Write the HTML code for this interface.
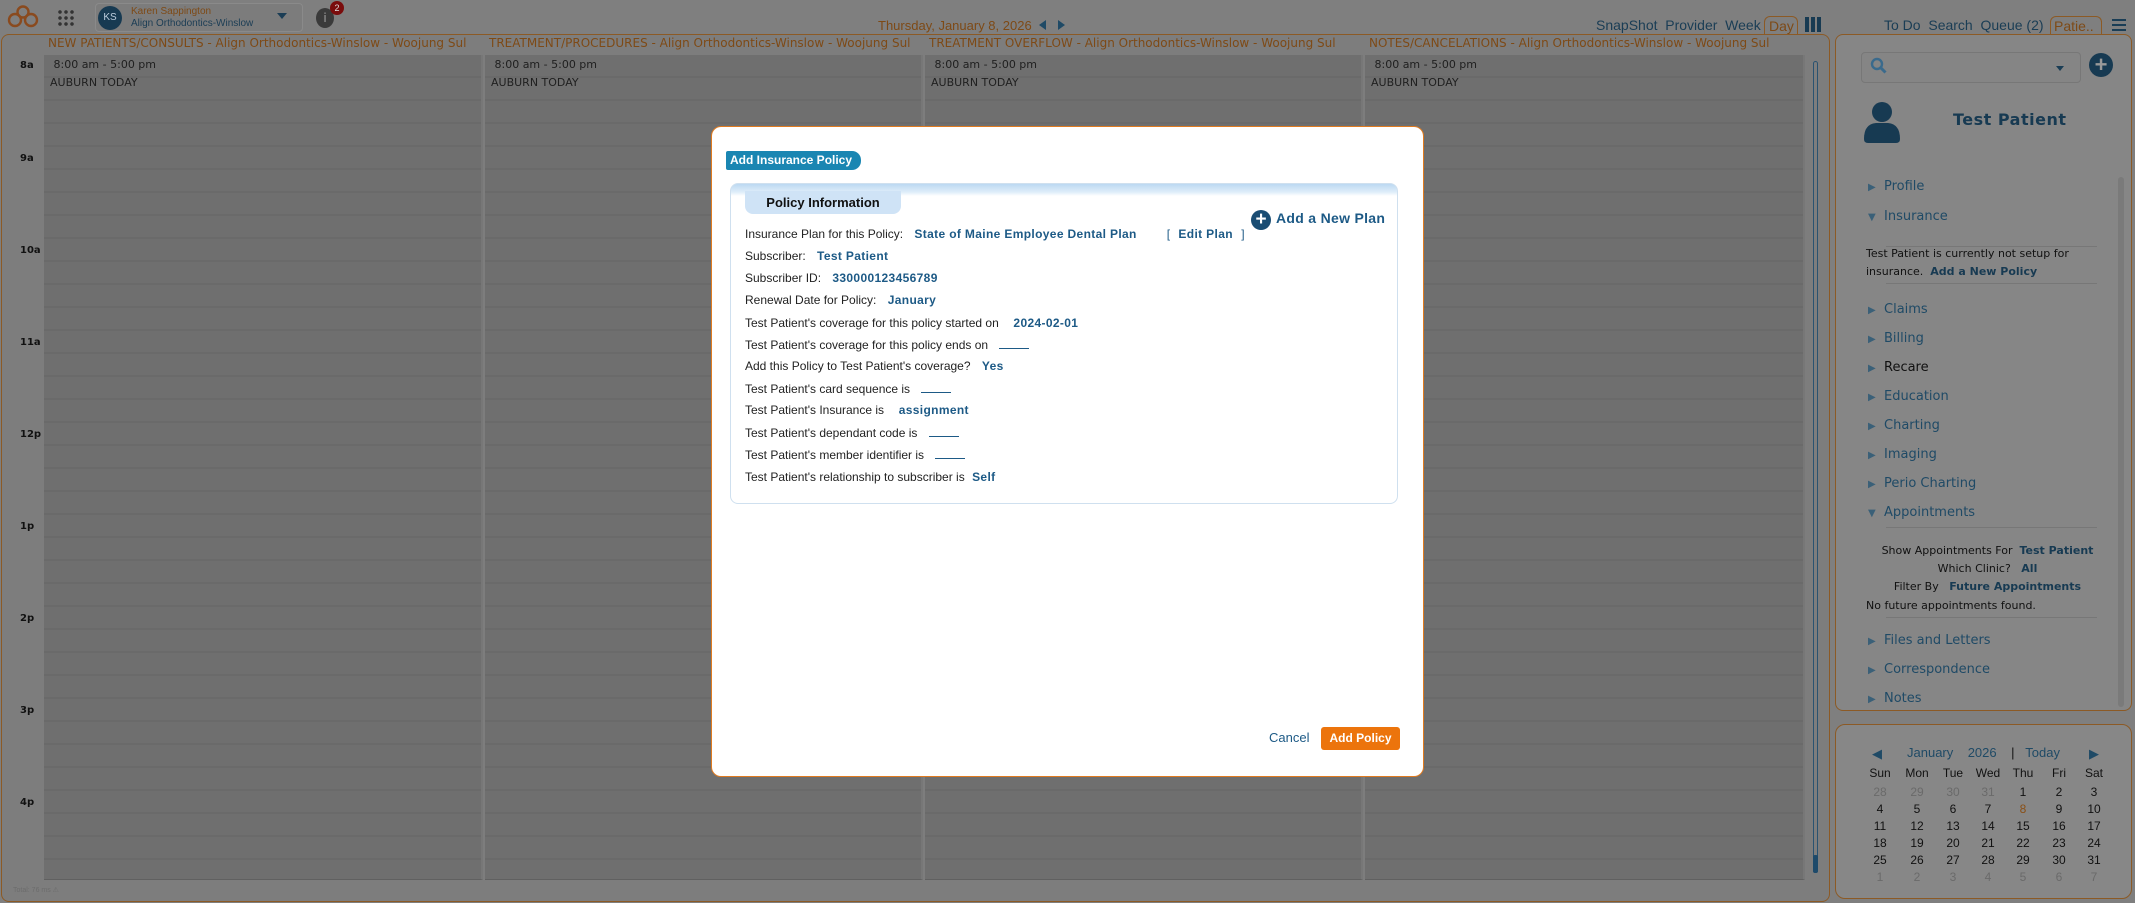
<!DOCTYPE html>
<html><head><meta charset="utf-8">
<style>
*{margin:0;padding:0;box-sizing:border-box}
body{width:2135px;height:903px;background:#7f7f7f;position:relative;overflow:hidden;font-family:"Liberation Sans",sans-serif}
.a{position:absolute;white-space:nowrap}
.dv{font-family:"DejaVu Sans",sans-serif}
.col{position:absolute;top:55px;height:825px;background:#6f6f6f repeating-linear-gradient(to bottom,transparent 0,transparent 21px,#6a6a6a 21px,#6a6a6a 23px);border-right:2px solid #777;border-bottom:1px solid #606060}
.hd{position:absolute;top:36px;font-size:12px;color:#7e4a16}
.tm{font-size:11px;color:#202020}
.hr{font-size:10px;font-weight:bold;color:#111;left:20px}
.lbl{position:absolute;left:745px;font-size:12px;color:#222}
.lbl b{color:#1d5a86;margin-left:8px;letter-spacing:.35px}
.blank{display:inline-block;width:30px;border-bottom:1px solid #1d5a86;margin-left:8px;height:9px}
.mi{position:absolute;left:1868px;font-size:13px;color:#1f4a66;font-family:"DejaVu Sans",sans-serif}
.mi i{font-style:normal;font-size:10px;color:#3a6078;display:inline-block;width:16px}
.cal{position:absolute;font-size:12px;color:#111;text-align:center;width:30px}
</style></head><body>

<!-- top bar -->
<svg class="a" style="left:6px;top:5px" width="34" height="24" viewBox="0 0 34 24"><g fill="none" stroke="#8a4a1e" stroke-width="2.4"><circle cx="17" cy="7" r="5.5"/><circle cx="9" cy="15" r="6"/><circle cx="25" cy="15" r="6"/></g></svg>
<div class="a" style="left:57px;top:9px;width:18px;height:18px;background:radial-gradient(circle,#333 1.6px,transparent 2px) 0 0/6px 6px"></div>
<div class="a" style="left:95px;top:3px;width:208px;height:29px;border:1px solid #8a8a8a;border-radius:4px;background:#7c7c7c"></div>
<div class="a" style="left:98px;top:6px;width:24px;height:24px;border-radius:50%;background:#173a52;color:#bcd;font-size:10px;text-align:center;line-height:24px">KS</div>
<div class="a" style="left:131px;top:6px;font-size:10px;color:#7e4a16">Karen Sappington</div>
<div class="a" style="left:131px;top:18px;font-size:10px;color:#1b3d55">Align Orthodontics-Winslow</div>
<div class="a" style="left:277px;top:13px;width:0;height:0;border:5px solid transparent;border-top:6px solid #1b3d55"></div>
<div class="a" style="left:316px;top:8px;width:18px;height:20px;border-radius:50%;background:#3a3a3a;color:#777;font-size:13px;font-weight:bold;text-align:center;line-height:20px">i</div>
<div class="a" style="left:330px;top:1px;width:14px;height:14px;border-radius:50%;background:#7a0c0c;color:#ddd;font-size:9px;text-align:center;line-height:14px">2</div>
<div class="a" style="left:878px;top:18px;font-size:13px;color:#7e4a16">Thursday, January 8, 2026</div>
<div class="a" style="left:1039px;top:20px;border:5px solid transparent;border-right:7px solid #1f4a66;border-left:0"></div>
<div class="a" style="left:1058px;top:20px;border:5px solid transparent;border-left:7px solid #1f4a66;border-right:0"></div>
<div class="a" style="left:1596px;top:17px;font-size:14px;color:#1a3d55">SnapShot&nbsp; Provider&nbsp; Week</div>
<div class="a" style="left:1764px;top:16px;width:34px;height:20px;border:1px solid #8c5a25;border-bottom:none;border-radius:6px 6px 0 0;font-size:14px;color:#7e4a16;padding-left:4px;line-height:19px">Day</div>
<div class="a" style="left:1805px;top:17px;width:17px;height:15px;background:repeating-linear-gradient(to right,#173a52 0,#173a52 4px,transparent 4px,transparent 6px)"></div>
<div class="a" style="left:1884px;top:17px;font-size:14px;color:#1a3d55">To Do&nbsp; Search&nbsp; Queue (2)</div>
<div class="a" style="left:2050px;top:16px;width:52px;height:20px;border:1px solid #8c5a25;border-bottom:none;border-radius:6px 6px 0 0;font-size:14px;color:#7e4a16;padding-left:3px;line-height:19px">Patie..</div>
<div class="a" style="left:2112px;top:19px;width:14px;height:12px;background:repeating-linear-gradient(to bottom,#1a3d55 0,#1a3d55 2px,transparent 2px,transparent 5px)"></div>

<!-- main panel -->
<div class="a" style="left:1px;top:34px;width:1829px;height:868px;border:1.5px solid #8c5a25;border-radius:8px;background:#7d7d7d"></div>
<div class="hd dv" style="left:48px">NEW PATIENTS/CONSULTS - Align Orthodontics-Winslow - Woojung Sul</div>
<div class="hd dv" style="left:489px">TREATMENT/PROCEDURES - Align Orthodontics-Winslow - Woojung Sul</div>
<div class="hd dv" style="left:929px">TREATMENT OVERFLOW - Align Orthodontics-Winslow - Woojung Sul</div>
<div class="hd dv" style="left:1369px">NOTES/CANCELATIONS - Align Orthodontics-Winslow - Woojung Sul</div>
<div class="col" style="left:44px;width:439px"></div>
<div class="col" style="left:485px;width:438px"></div>
<div class="col" style="left:925px;width:438px"></div>
<div class="col" style="left:1365px;width:440px"></div>
<div class="a tm dv" style="left:50px;top:58px">&nbsp;8:00 am - 5:00 pm</div><div class="a tm dv" style="left:50px;top:76px">AUBURN TODAY</div>
<div class="a tm dv" style="left:491px;top:58px">&nbsp;8:00 am - 5:00 pm</div><div class="a tm dv" style="left:491px;top:76px">AUBURN TODAY</div>
<div class="a tm dv" style="left:931px;top:58px">&nbsp;8:00 am - 5:00 pm</div><div class="a tm dv" style="left:931px;top:76px">AUBURN TODAY</div>
<div class="a tm dv" style="left:1371px;top:58px">&nbsp;8:00 am - 5:00 pm</div><div class="a tm dv" style="left:1371px;top:76px">AUBURN TODAY</div>
<div class="a hr dv" style="top:60px">8a</div>
<div class="a hr dv" style="top:153px">9a</div>
<div class="a hr dv" style="top:245px">10a</div>
<div class="a hr dv" style="top:337px">11a</div>
<div class="a hr dv" style="top:429px">12p</div>
<div class="a hr dv" style="top:521px">1p</div>
<div class="a hr dv" style="top:613px">2p</div>
<div class="a hr dv" style="top:705px">3p</div>
<div class="a hr dv" style="top:797px">4p</div>
<div class="a" style="left:1813px;top:61px;width:5px;height:812px;border:1px solid #2a5270;border-radius:3px"></div>
<div class="a" style="left:1813px;top:855px;width:5px;height:18px;background:#1e4a6a;border-radius:2px"></div>
<div class="a" style="left:13px;top:886px;font-size:7px;color:#6c6c6c">Total: 76 ms ⚠</div>

<!-- right panel -->
<div class="a" style="left:1835px;top:34px;width:297px;height:677px;border:1.5px solid #8c5a25;border-radius:8px;background:#868686"></div>
<div class="a" style="left:1861px;top:52px;width:220px;height:31px;border:1px solid #777;border-radius:4px;background:#858585"></div>
<svg class="a" style="left:1870px;top:57px" width="18" height="18" viewBox="0 0 18 18"><circle cx="7" cy="7" r="5" fill="none" stroke="#3a6a8c" stroke-width="2.4"/><path d="M10.5 10.5l5 5" stroke="#3a6a8c" stroke-width="3"/></svg>
<div class="a" style="left:2056px;top:66px;border:4px solid transparent;border-top:5px solid #1a3d55"></div>
<div class="a" style="left:2089px;top:53px;width:24px;height:24px;border-radius:50%;background:#173a52;color:#999;font-size:22px;font-weight:bold;text-align:center;line-height:23px">+</div>
<svg class="a" style="left:1863px;top:101px" width="38" height="42" viewBox="0 0 38 42"><circle cx="19" cy="11" r="10" fill="#173a52"/><path d="M1 38 Q1 23 13 22 L25 22 Q37 23 37 38 Q37 42 33 42 L5 42 Q1 42 1 38Z" fill="#173a52"/></svg>
<div class="a dv" style="left:1953px;top:110px;font-size:16px;font-weight:bold;color:#173a52;letter-spacing:.5px">Test Patient</div>
<div class="mi" style="top:179px"><i>▶</i>Profile</div>
<div class="mi" style="top:209px"><i>▼</i>Insurance</div>
<div class="a" style="left:1886px;top:246px;width:211px;border-top:1px solid #777"></div>
<div class="a dv" style="left:1866px;top:245px;font-size:11px;color:#111;line-height:18px">Test Patient is currently not setup for<br>insurance. &nbsp;<b style="color:#173a52">Add a New Policy</b></div>
<div class="a" style="left:1886px;top:283px;width:211px;border-top:1px solid #777"></div>
<div class="mi" style="top:302px"><i>▶</i>Claims</div>
<div class="mi" style="top:331px"><i>▶</i>Billing</div>
<div class="mi" style="top:360px"><i>▶</i><span style="color:#111">Recare</span></div>
<div class="mi" style="top:389px"><i>▶</i>Education</div>
<div class="mi" style="top:418px"><i>▶</i>Charting</div>
<div class="mi" style="top:447px"><i>▶</i>Imaging</div>
<div class="mi" style="top:476px"><i>▶</i>Perio Charting</div>
<div class="mi" style="top:505px"><i>▼</i>Appointments</div>
<div class="a" style="left:1886px;top:527px;width:211px;border-top:1px solid #777"></div>
<div class="a dv" style="left:1872px;top:542px;width:231px;text-align:center;font-size:11px;color:#111;line-height:18px">Show Appointments For &nbsp;<b style="color:#173a52">Test Patient</b><br>Which Clinic? &nbsp;&nbsp;<b style="color:#173a52">All</b><br>Filter By &nbsp;&nbsp;<b style="color:#173a52">Future Appointments</b></div>
<div class="a dv" style="left:1866px;top:599px;font-size:11px;color:#111">No future appointments found.</div>
<div class="a" style="left:1886px;top:617px;width:211px;border-top:1px solid #777"></div>
<div class="mi" style="top:633px"><i>▶</i>Files and Letters</div>
<div class="mi" style="top:662px"><i>▶</i>Correspondence</div>
<div class="mi" style="top:691px;height:16px;overflow:hidden"><i>▶</i>Notes</div>
<div class="a" style="left:2118px;top:177px;width:6px;height:530px;background:#7a7a7a;border-radius:3px"></div>

<!-- mini calendar -->
<div class="a" style="left:1835px;top:724px;width:297px;height:175px;border:1.5px solid #8c5a25;border-radius:10px;background:#878787"></div>
<div class="a" style="left:1872px;top:746px;font-size:13px;color:#1f4a66">◀</div>
<div class="a" style="left:1907px;top:745px;font-size:13px;color:#1f4a66">January &nbsp;&nbsp;&nbsp;2026 &nbsp;&nbsp;&nbsp;<span style="color:#111">|</span> &nbsp;&nbsp;Today</div>
<div class="a" style="left:2089px;top:746px;font-size:13px;color:#1f4a66">▶</div>
<div id="cal"></div>
<script>
var xs=[1880,1917,1953,1988,2023,2059,2094],h='';
var names=['Sun','Mon','Tue','Wed','Thu','Fri','Sat'];
names.forEach(function(n,i){h+='<div class="cal" style="left:'+(xs[i]-15)+'px;top:766px">'+n+'</div>'});
var d=[[28,29,30,31,1,2,3],[4,5,6,7,8,9,10],[11,12,13,14,15,16,17],[18,19,20,21,22,23,24],[25,26,27,28,29,30,31],[1,2,3,4,5,6,7]];
var ys=[785,802,819,836,853,870];
d.forEach(function(r,ri){r.forEach(function(v,i){var c='#111';if((ri==0&&i<4)||ri==5)c='#6a6a6a';if(ri==1&&i==4)c='#8a4f15';h+='<div class="cal" style="left:'+(xs[i]-15)+'px;top:'+ys[ri]+'px;color:'+c+'">'+v+'</div>'})});
document.getElementById('cal').innerHTML=h;
</script>

<!-- modal -->
<div class="a" style="left:711px;top:126px;width:713px;height:651px;background:#fff;border:1.5px solid #e07b20;border-radius:10px"></div>
<div class="a" style="left:726px;top:151px;width:135px;height:19px;background:#1a86b2;border-radius:2px 9px 9px 2px;color:#fff;font-size:12px;font-weight:bold;line-height:19px;padding-left:4px">Add Insurance Policy</div>
<div class="a" style="left:730px;top:183px;width:668px;height:321px;border:1px solid #cfe0ef;border-radius:8px;background:linear-gradient(to bottom,#bcd9f2 0,#deedf9 8px,#fff 12px)"></div>
<div class="a" style="left:745px;top:191px;width:156px;height:23px;background:#cfe3f6;border-radius:0 0 8px 8px;font-size:13px;font-weight:bold;color:#111;text-align:center;line-height:23px">Policy Information</div>
<div class="a" style="left:1251px;top:210px;width:20px;height:20px;border-radius:50%;background:#1a4d73;color:#fff;font-size:19px;font-weight:bold;text-align:center;line-height:20px">+</div>
<div class="a" style="left:1276px;top:210px;font-size:14px;font-weight:bold;color:#1d5a86;letter-spacing:.3px">Add a New Plan</div>
<div class="lbl" style="top:227px">Insurance Plan for this Policy: <b>State of Maine Employee Dental Plan</b><span style="margin-left:30px;color:#1d5a86">[ <b style="margin:0 5px">Edit Plan</b> ]</span></div>
<div class="lbl" style="top:249px">Subscriber: <b>Test Patient</b></div>
<div class="lbl" style="top:271px">Subscriber ID: <b>330000123456789</b></div>
<div class="lbl" style="top:293px">Renewal Date for Policy: <b>January</b></div>
<div class="lbl" style="top:316px">Test Patient's coverage for this policy started on &nbsp;<b>2024-02-01</b></div>
<div class="lbl" style="top:338px">Test Patient's coverage for this policy ends on <span class="blank"></span></div>
<div class="lbl" style="top:359px">Add this Policy to Test Patient's coverage? <b>Yes</b></div>
<div class="lbl" style="top:382px">Test Patient's card sequence is <span class="blank"></span></div>
<div class="lbl" style="top:403px">Test Patient's Insurance is &nbsp;<b>assignment</b></div>
<div class="lbl" style="top:426px">Test Patient's dependant code is <span class="blank"></span></div>
<div class="lbl" style="top:448px">Test Patient's member identifier is <span class="blank"></span></div>
<div class="lbl" style="top:470px">Test Patient's relationship to subscriber is <b style="margin-left:4px">Self</b></div>
<div class="a" style="left:1269px;top:730px;font-size:13px;color:#1d5a86">Cancel</div>
<div class="a" style="left:1321px;top:727px;width:79px;height:23px;background:#ec740c;border-radius:3px;color:#fff;font-size:12px;font-weight:bold;text-align:center;line-height:23px">Add Policy</div>
</body></html>
